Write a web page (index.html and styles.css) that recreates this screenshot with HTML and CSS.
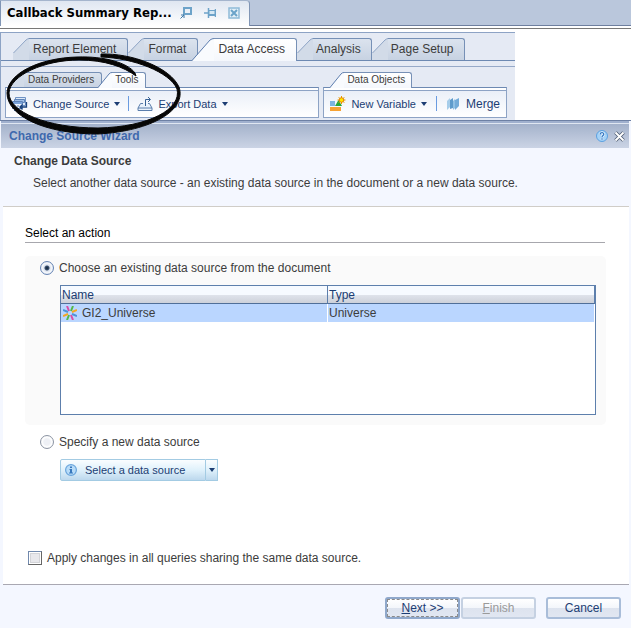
FILE: index.html
```
<!DOCTYPE html>
<html lang="en">
<head>
<meta charset="utf-8">
<title>Change Source Wizard</title>
<link rel="stylesheet" href="styles.css">
</head>
<body>
<header class="titlebar">
  <div class="doc-tab">
    <span class="doc-name">Callback Summary Rep...</span>
    <button class="icon-btn" aria-label="Detach"><svg width="12" height="12" viewBox="0 0 12 12" fill="none"><path d="M4 1h7v6H4z" stroke="#6da3c9" stroke-width="2"/><path d="M0.500 11.500 4 8M1 8h3v3" stroke="#3f79a8"/></svg></button>
    <button class="icon-btn" aria-label="Pin"><svg width="12" height="12" viewBox="0 0 12 12" fill="none"><path d="M0 6h4M4.500 1v10M11.500 2v8" stroke="#6da3c9" stroke-width="1.500"/><path d="M5 3.500h6v5H5z" fill="#d6e8f4" stroke="#6da3c9"/><path d="M5 8h6" stroke="#6da3c9" stroke-width="2"/></svg></button>
    <button class="icon-btn" aria-label="Close document"><svg width="12" height="12" viewBox="0 0 12 12" fill="none"><path d="M1 1h10v10H1z" fill="#e3eff7" stroke="#8fbad8" stroke-width="1.500"/><path d="m3 3 6 6m0-6-6 6" stroke="#6ba3c9" stroke-width="2"/></svg></button>
  </div>
</header>

<section class="ribbon">
  <nav class="tabs">
    <button class="tab"><svg class="slant" width="16" height="22" viewBox="0 0 16 22"><path class="fill" d="M0 22V15L13 2Q15 .5 16 .5V22z"/><path class="edge" d="M.5 15 13 2Q15 .5 16 .5"/></svg><span>Report Element</span></button>
    <button class="tab"><svg class="slant" width="16" height="22" viewBox="0 0 16 22"><path class="fill" d="M0 22V15L13 2Q15 .5 16 .5V22z"/><path class="edge" d="M.5 15 13 2Q15 .5 16 .5"/></svg><span>Format</span></button>
    <button class="tab active"><svg class="slant" width="22" height="23" viewBox="0 0 22 23"><path class="fill" d="M0 23 18 2Q20 .5 22 .5V23z"/><path class="edge" d="M0 22.500 18 2Q20 .5 22 .5"/></svg><span>Data Access</span></button>
    <button class="tab"><svg class="slant" width="16" height="22" viewBox="0 0 16 22"><path class="fill" d="M0 22V15L13 2Q15 .5 16 .5V22z"/><path class="edge" d="M.5 15 13 2Q15 .5 16 .5"/></svg><span>Analysis</span></button>
    <button class="tab"><svg class="slant" width="16" height="22" viewBox="0 0 16 22"><path class="fill" d="M0 22V15L13 2Q15 .5 16 .5V22z"/><path class="edge" d="M.5 15 13 2Q15 .5 16 .5"/></svg><span>Page Setup</span></button>
  </nav>
  <div class="groups">
    <div class="group group-wide">
      <nav class="tabs subtabs">
        <button class="tab"><svg class="slant" width="12" height="15" viewBox="0 0 12 15"><path class="fill" d="M0 15V11L9 2Q11 .5 12 .5V15z"/><path class="edge" d="M.5 11 9 2Q11 .5 12 .5"/></svg><span>Data Providers</span></button>
        <button class="tab active"><svg class="slant" width="14" height="16" viewBox="0 0 14 16"><path class="fill" d="M0 16 11 2Q12 .5 14 .5V16z"/><path class="edge" d="M0 15.500 11 2Q12 .5 14 .5"/></svg><span>Tools</span></button>
      </nav>
      <div class="tools">
        <button class="tool"><svg width="16" height="16" viewBox="0 0 16 16" fill="none"><path d="M3.500 1.500h10v8h-10z" fill="#dce9f8" stroke="#6f92c4"/><path d="M2.500 3.500h10v3h-10z" fill="#9dbde6" stroke="#5e83b8"/><path d="M.5 5.500h10v7H.5z" fill="#eef5ff" stroke="#5e83b8"/><path d="M1 6h9v2H1z" fill="#7ba3da"/><path d="M2 10h2m1 0h2M2 14.500h6" stroke="#5e83b8"/><path d="M14.500 6v5H8M10.500 8.500 8 11l2.500 2.500" stroke="#163f7a" stroke-width="1.300"/></svg>Change Source<i class="caret"></i></button>
        <i class="sep"></i>
        <button class="tool"><svg width="16" height="16" viewBox="0 0 16 16" fill="none"><path d="M6 7.500H3.500L1 12v2.500h14V12l-2.500-4.500H11" fill="#e9f1fb" stroke="#5b7eac"/><path d="M1 12h14" stroke="#5b7eac"/><path d="M8.500 10V3.500H13M11 1l2.500 2.500L11 6" stroke="#376194"/></svg>Export Data<i class="caret"></i></button>
      </div>
    </div>
    <div class="group">
      <nav class="tabs subtabs">
        <button class="tab active"><svg class="slant" width="14" height="16" viewBox="0 0 14 16"><path class="fill" d="M0 16 11 2Q12 .5 14 .5V16z"/><path class="edge" d="M0 15.500 11 2Q12 .5 14 .5"/></svg><span>Data Objects</span></button>
      </nav>
      <div class="tools">
        <button class="tool"><svg width="16" height="16" viewBox="0 0 16 16"><path fill="#7db4e0" d="M0 5h5v5H0z"/><path fill="#f7a233" d="M0 11h11v4H0z"/><path fill="#27a737" d="m8.500 4 3.500 6H5z"/><path d="M11.500 0v8M7.500 4h8M8.700 1.200l5.600 5.600m0-5.600L8.700 6.800" stroke="#e8a000"/><circle cx="11.500" cy="4" r="2.300" fill="#ffe600" stroke="#e06a00" stroke-width=".8"/></svg>New Variable<i class="caret"></i></button>
        <i class="sep"></i>
        <button class="tool merge"><svg width="14" height="14" viewBox="0 0 14 14"><path fill="#a6cdea" d="M1 4 4 1v9l-3 3z"/><path fill="#5e9bcb" d="m4 3 3-2v10l-3 1z"/><path fill="#8fc0e4" d="m7 4 2-2v9l-2 2z"/><path fill="#73abd8" d="m9 3 4-2v8l-4 4z"/></svg>Merge</button>
      </div>
    </div>
  </div>
  <svg class="marker" width="180" height="88" viewBox="0 0 180 88" aria-hidden="true"><path d="M96 3C126 2 165 16 174 36C182 59 147 80 93 83C40 83 2 65 2 42C3 22 35 7 72 6C100 5 123 12 130 22L131 25C119 16 100 9 74 9C40 9 5 24 4 42C4 61 42 77 93 77C144 76 177 58 172 38C165 21 128 7 96 6Z" fill="#060606" stroke="#060606"/></svg>
</section>

<main class="wizard">
  <div class="wizard-title">
    <h1>Change Source Wizard</h1>
    <button class="icon-btn" aria-label="Help"><svg width="12" height="12" viewBox="0 0 12 12"><circle cx="6" cy="6" r="5.500" fill="#a5d2f7" stroke="#5da0df"/><path d="M4.200 4.500C4.200 2 8 2.200 7.800 4.400 7.700 5.600 6 5.600 6 7.200M6 8.300v1.400" fill="none" stroke="#fff" stroke-width="2.400"/><path d="M4.200 4.500C4.200 2 8 2.200 7.800 4.400 7.700 5.600 6 5.600 6 7.200M6 8.300v1.400" fill="none" stroke="#2f76c4" stroke-width="1.300"/></svg></button>
    <button class="icon-btn" aria-label="Close"><svg width="11" height="11" viewBox="0 0 11 11"><path d="m1.500 1.500 8 8m0-8-8 8" stroke="#4d5a70" stroke-width="3.500"/><path d="m1.500 1.500 8 8m0-8-8 8" stroke="#fff" stroke-width="2"/></svg></button>
  </div>
  <div class="intro">
    <h2>Change Data Source</h2>
    <p>Select another data source - an existing data source in the document or a new data source.</p>
  </div>
  <form class="content">
    <h3>Select an action</h3>
    <div class="panel">
      <label class="choice"><input type="radio" name="source" checked>Choose an existing data source from the document</label>
      <div class="list">
        <table>
          <thead><tr><th>Name</th><th>Type</th></tr></thead>
          <tbody><tr><td><span class="cell"><svg width="14" height="14" viewBox="0 0 14 14" stroke-width="2" fill="none"><path stroke="#d94fa8" d="m4 0 2 5M10 14 8 9"/><path stroke="#55b947" d="m10 0-2 5M4 14l2-5"/><path stroke="#f5a623" d="m14 4-5 2M0 10l5-2"/><path stroke="#4d93d9" d="m0 4 5 2M14 10 9 8"/></svg>GI2_Universe</span></td><td>Universe</td></tr></tbody>
        </table>
      </div>
    </div>
    <div class="new-source">
      <label class="choice"><input type="radio" name="source">Specify a new data source</label>
      <div class="split">
        <button type="button" class="split-main"><svg width="12" height="12" viewBox="0 0 12 12"><circle cx="6" cy="6" r="5.400" fill="#b8dcf8" stroke="#6aa5dc" stroke-width="1.200"/><path d="M5 2.500h2V4H5zM4.500 5H7v3.500h1v1H4v-1h1V6h-.5z" fill="#3878bd"/></svg>Select a data source</button>
        <button type="button" class="split-arrow" aria-label="More sources"><i class="caret"></i></button>
      </div>
    </div>
    <label class="choice apply"><input type="checkbox">Apply changes in all queries sharing the same data source.</label>
  </form>
  <footer class="actions">
    <button class="btn primary"><span><u>N</u>ext &gt;&gt;</span></button>
    <button class="btn" disabled><span><u>F</u>inish</span></button>
    <button class="btn cancel"><span>Cancel</span></button>
  </footer>
</main>
</body>
</html>
```
FILE: styles.css
```
* { box-sizing: border-box; }

body {
  margin: 0;
  background: #fff;
  color: #3c3c3c;
  font: 12px/16px "Liberation Sans", Arial, sans-serif;
}

h1, h2, h3, p { margin: 0; }

button {
  margin: 0;
  padding: 0;
  border: 0;
  background: none;
  color: inherit;
  font: inherit;
}

svg { display: block; flex: none; }

.icon-btn { flex: none; }

/* Document title */
.titlebar {
  display: flex;
  height: 29px;
  background: linear-gradient(#bac7dc 25px, #6e7f9f 25px, #6e7f9f 26px, #fff 26px, #fff 28px, #777 28px);
}

.doc-tab {
  display: flex;
  align-items: center;
  gap: 12px;
  height: 26px;
  padding: 0 9px 2px 6px;
  border: 1px solid #8095b5;
  border-top-color: #a5b5cd;
  border-bottom: 0;
  border-radius: 0 4px 0 0;
  background: linear-gradient(#dfe6f1, #fff);
}

.doc-name {
  margin-right: -4px;
  color: #000;
  font: bold 13px/16px "DejaVu Sans Condensed", Tahoma, sans-serif;
  white-space: nowrap;
}

/* Ribbon */
.ribbon {
  position: relative;
  width: calc(100% - 116px);
  margin-top: 3px;
  border-top: 1px solid #8da3c5;
  border-left: 1px solid #8da3c5;
  background: #e5eaf4;
}

.tabs {
  display: flex;
  align-items: flex-end;
  height: 28px;
  padding-left: 12px;
  border-bottom: 1px solid #6d89b2;
}

.tab {
  display: flex;
  height: 22px;
  color: #3c3c3c;
  line-height: 20px;
  white-space: nowrap;
}

.tab > span {
  height: 100%;
  padding: 0 11px 0 4px;
  border: solid #7690b6;
  border-width: 1px 1px 0 0;
  border-radius: 0 3px 0 0;
  background: linear-gradient(#dbe3ee, #c7d2e2);
}

.tab .fill { fill: #d2dbe8; }
.tab .edge { fill: none; stroke: #8fa5c6; }

.tab.active {
  position: relative;
  height: 23px;
  margin-bottom: -1px;
}

.tab + .tab.active { margin-left: -6px; }
.tab.active > span { background: linear-gradient(#fff, #f4f7fc); }
.tab.active .fill { fill: #f9fbfe; }
.tab.active .edge { stroke: #5f7faf; }

.tab.active + .tab > span,
.tab.active + .tab + .tab > span { padding: 0 10px 0 3px; }

.groups {
  display: flex;
  gap: 4px;
  margin-top: 5px;
  padding: 4px 8px 2px 4px;
  border-top: 1px solid #96a9c8;
}

.group-wide { flex: 1; }

.subtabs {
  height: 16px;
  padding-left: 7px;
  border-bottom: 0;
  font-size: 10px;
}

.subtabs .tab { height: 15px; line-height: 14px; }
.subtabs .tab > span { padding: 0 7px 0 4px; }
.subtabs .tab.active { height: 16px; }
.subtabs .tab.active > span { padding: 0 6px 0 3px; }
.group-wide .tab + .tab.active { margin-left: -4px; }

.tools {
  display: flex;
  align-items: center;
  gap: 8px;
  height: 31px;
  padding: 2px 6px 0;
  border: 1px solid #8da3c5;
  border-top-color: #6d89b2;
  background: linear-gradient(#fff 2px, #8da3c5 2px, #8da3c5 3px, #eaeff8 3px, #fff);
}

.tool {
  display: flex;
  align-items: center;
  gap: 5px;
  color: #1c3d73;
  font-size: 11px;
  white-space: nowrap;
}

.merge { gap: 6px; font-size: 12px; }
.group:last-child .tools { gap: 9px; }

.caret {
  width: 0;
  border: solid transparent;
  border-width: 4px 3px 0;
  border-top-color: #1c3d73;
}

.sep { width: 1px; height: 15px; background: #6a9be0; }

/* Hand-drawn highlight around the Tools tab */
.marker { position: absolute; left: 4px; top: 18px; pointer-events: none; }

/* Wizard */
.wizard {
  padding: 0 2px 0 1px;
  border-top: 1px solid #6d80a4;
  background: #f4f7ff;
}

.wizard-title {
  display: flex;
  align-items: center;
  gap: 6px;
  height: 27px;
  padding: 1px 4px 0 8px;
  border-top: 2px solid #a0b0ce;
  background: linear-gradient(#dfe6f1 1px, #a4b2cb 1px, #cbd4e5);
}

.wizard-title h1 {
  flex: 1;
  color: #3f69ad;
  font-size: 12px;
  line-height: 16px;
}

.intro {
  height: 59px;
  margin-left: 2px;
  padding: 5px 11px;
  border-bottom: 1px solid #d0cdc8;
}

.intro h2 { font-size: 12px; line-height: 16px; }
.intro p { margin: 6px 0 0 19px; }

.content {
  display: flex;
  flex-direction: column;
  margin-left: 2px;
  padding: 18px 23px 18px 22px;
  border-bottom: 1px solid #a9a8b2;
  background: #fff;
}

.content h3 {
  margin-right: 1px;
  padding-bottom: 1px;
  border-bottom: 1px solid #a7a7ad;
  color: #000;
  font-size: 12px;
  font-weight: normal;
}

.panel {
  margin-top: 13px;
  padding: 4px 10px 10px 15px;
  border-radius: 5px;
  background: #fafafa;
}

.choice { display: flex; align-items: center; gap: 5px; }

input {
  appearance: none;
  flex: none;
  width: 14px;
  height: 14px;
  margin: 0;
  border: 1px solid #8c94a3;
}

input[type="radio"] {
  border-radius: 50%;
  background: radial-gradient(#eef0f5 3px, #fff 5px, #dde0e8);
}

input[type="radio"]:checked {
  border-color: #6785b4;
  background: radial-gradient(#1d3048 1px, #3c5474 2px, #dce3ef 3px, #f7f9fc 5px, #a9bedd);
}

input[type="checkbox"] {
  border-color: #7189ad #666 #666 #7189ad;
  background: #e8e8ec;
  box-shadow: inset 0 0 0 1px #fff, inset 0 0 0 2px #d3d4d8;
}

.list {
  height: 130px;
  margin: 9px 0 0 20px;
  border: 1px solid #5d7fac;
  background: #fff;
}

table {
  width: 100%;
  border-collapse: separate;
  border-spacing: 0;
  table-layout: fixed;
}

th, td { height: 18px; padding: 0 1px; text-align: left; line-height: 16px; }

th {
  border-right: 1px solid #5d7fac;
  border-bottom: 1px solid #506f99;
  background: linear-gradient(#f6faff 9px, #dfe3eb 9px, #cdd1da);
  color: #1c3d73;
  font-weight: normal;
}

td { border-right: 1px solid #fff; background: #bad6ff; }

.cell { display: flex; align-items: center; gap: 5px; padding-left: 1px; }

.new-source { padding: 9px 15px 0; }

.split { display: flex; margin: 9px 0 0 20px; }

.split button {
  display: flex;
  align-items: center;
  height: 22px;
  border: 1px solid #a3cbe3;
  background: linear-gradient(#fafdff, #dff1fb 50%, #bcd8ed);
  color: #1c3d73;
  font-size: 11px;
}

.split .split-main {
  gap: 8px;
  padding: 0 20px 0 4px;
  border-radius: 2px 0 0 2px;
}

.split .split-arrow { justify-content: center; width: 12px; border-left: 0; }

.apply { margin: 69px 0 0 3px; }

.actions { display: flex; gap: 1px; justify-content: flex-end; padding: 12px 8px 9px; }

.btn {
  width: 75px;
  height: 22px;
  padding: 1px;
  border: 2px solid #a9bdd9;
  border-radius: 3px;
  background: linear-gradient(#fff, #f3f6fb 50%, #dde3ee 50%, #e1e7f2);
  color: #1c3d73;
}

.btn span { display: block; line-height: 16px; }
.btn:disabled { border-color: #c5d1e2; color: #9a9a9a; }
.primary { padding: 0; border-color: #8fa8cb; }
.primary span { border: 1px dashed #8b8b8b; }
.cancel { margin-left: 9px; }
```
